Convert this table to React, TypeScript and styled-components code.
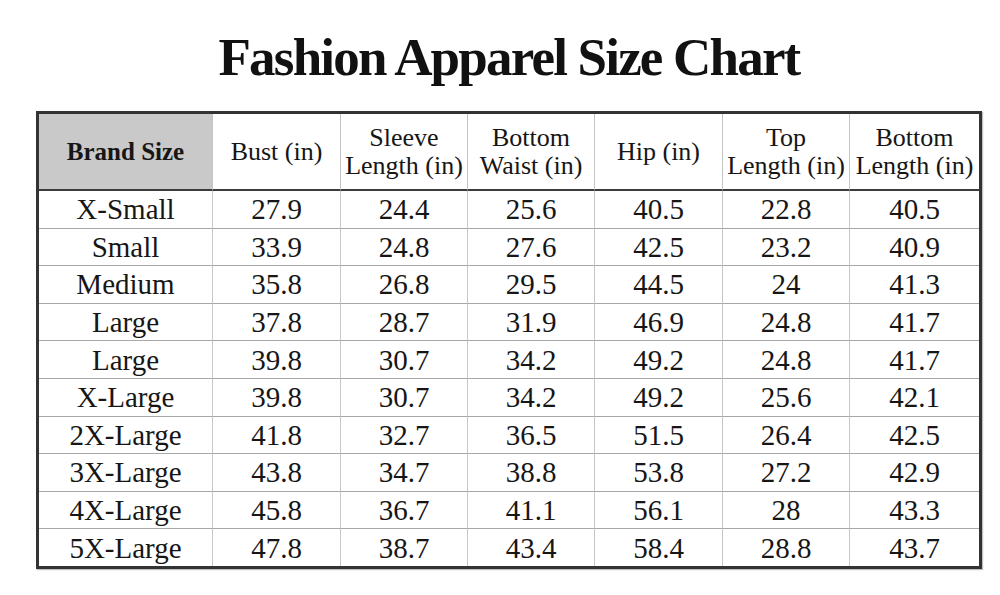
import React from "react";
import styled, { createGlobalStyle } from "styled-components";

const Global = createGlobalStyle`
  html, body { margin: 0; padding: 0; background: #ffffff; }
  body { font-family: "Liberation Serif", "Times New Roman", serif; color: #1a1a1a; }
  * { box-sizing: border-box; }
`;

const Page = styled.div`
  width: 1000px;
  height: 595px;
  padding: 27px 0 0 36px;
  background: #ffffff;
`;

const Wrap = styled.div`
  width: 946px;
  display: flex;
  flex-direction: column;
  align-items: center;
  gap: 24px;
`;

const Title = styled.h1`
  margin: 0;
  font-family: "Liberation Serif", serif;
  font-weight: 700;
  font-size: 53px;
  line-height: 60px;
  letter-spacing: -1.8px;
  color: #111;
  text-align: center;
`;

const Grid = styled.div`
  width: 946px;
  display: grid;
  grid-template-columns: 174px 128px 127px 127px 128px 127px 129px;
  border: 3px solid #333;
  box-shadow: 1px 1px 1px rgba(0, 0, 0, 0.25);
`;

const HeadCell = styled.div<{ $shaded?: boolean; $last?: boolean }>`
  height: 77px;
  display: flex;
  align-items: center;
  justify-content: center;
  text-align: center;
  border-bottom: 2px solid #3c3c3c;
  border-right: ${(p) => (p.$last ? "none" : "1px solid #c4c4c4")};
  background: ${(p) => (p.$shaded ? "#c9c9c9" : "#ffffff")};
  font-size: ${(p) => (p.$shaded ? "25px" : "26px")};
  font-weight: ${(p) => (p.$shaded ? 700 : 400)};
  line-height: 28px;
  color: #161616;
  white-space: nowrap;
`;

const Cell = styled.div<{ $lastRow?: boolean; $last?: boolean }>`
  height: ${(p) => (p.$lastRow ? "36.6px" : "37.6px")};
  display: flex;
  align-items: center;
  justify-content: center;
  font-size: 29px;
  line-height: 30px;
  color: #161616;
  border-bottom: ${(p) => (p.$lastRow ? "none" : "1px solid #a8a8a8")};
  border-right: ${(p) => (p.$last ? "none" : "1px solid #c8c8c8")};
  white-space: nowrap;
`;

const headers: { lines: string[] }[] = [
  { lines: ["Bust (in)"] },
  { lines: ["Sleeve", "Length (in)"] },
  { lines: ["Bottom", "Waist (in)"] },
  { lines: ["Hip (in)"] },
  { lines: ["Top", "Length (in)"] },
  { lines: ["Bottom", "Length (in)"] },
];

const rows: string[][] = [
  ["X-Small", "27.9", "24.4", "25.6", "40.5", "22.8", "40.5"],
  ["Small", "33.9", "24.8", "27.6", "42.5", "23.2", "40.9"],
  ["Medium", "35.8", "26.8", "29.5", "44.5", "24", "41.3"],
  ["Large", "37.8", "28.7", "31.9", "46.9", "24.8", "41.7"],
  ["Large", "39.8", "30.7", "34.2", "49.2", "24.8", "41.7"],
  ["X-Large", "39.8", "30.7", "34.2", "49.2", "25.6", "42.1"],
  ["2X-Large", "41.8", "32.7", "36.5", "51.5", "26.4", "42.5"],
  ["3X-Large", "43.8", "34.7", "38.8", "53.8", "27.2", "42.9"],
  ["4X-Large", "45.8", "36.7", "41.1", "56.1", "28", "43.3"],
  ["5X-Large", "47.8", "38.7", "43.4", "58.4", "28.8", "43.7"],
];

export default function App() {
  return (
    <>
      <Global />
      <Page>
        <Wrap>
          <Title>Fashion Apparel Size Chart</Title>
          <Grid>
            <HeadCell $shaded>Brand Size</HeadCell>
            {headers.map((h, i) => (
              <HeadCell key={i} $last={i === headers.length - 1}>
                <span>
                  {h.lines.map((l, j) => (
                    <React.Fragment key={j}>
                      {j > 0 && <br />}
                      {l}
                    </React.Fragment>
                  ))}
                </span>
              </HeadCell>
            ))}
            {rows.map((r, ri) =>
              r.map((v, ci) => (
                <Cell
                  key={`${ri}-${ci}`}
                  $lastRow={ri === rows.length - 1}
                  $last={ci === r.length - 1}
                >
                  {v}
                </Cell>
              ))
            )}
          </Grid>
        </Wrap>
      </Page>
    </>
  );
}
